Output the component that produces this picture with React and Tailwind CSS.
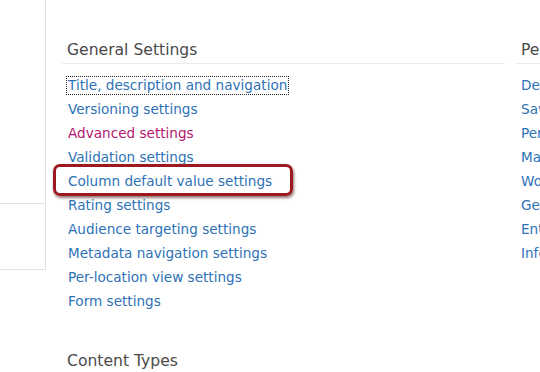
const general = [
  { label: 'Title, description and navigation', focus: true },
  { label: 'Versioning settings' },
  { label: 'Advanced settings', visited: true },
  { label: 'Validation settings' },
  { label: 'Column default value settings', marked: true },
  { label: 'Rating settings' },
  { label: 'Audience targeting settings' },
  { label: 'Metadata navigation settings' },
  { label: 'Per-location view settings' },
  { label: 'Form settings' },
];

const permissions = [
  'Delete this document library',
  'Save document library as template',
  'Permissions for this document library',
  'Manage files which have no checked in version',
  'Workflow Settings',
  'Generate file plan report',
  'Enterprise Metadata and Keywords Settings',
  'Information management policy settings',
];

function LinkRow({ item }) {
  const color = item.visited ? 'text-[#b3176f]' : 'text-[#2d72b6]';
  if (item.marked) {
    return (
      <li className="h-[24px] flex items-center relative">
        <span className={`pl-[6px] ${color}`}>{item.label}</span>
        <div className="absolute left-[-9px] top-[-5px] w-[240px] h-[32px] rounded-[7px] border-[3px] border-[#9c1a1f] shadow-[1px_2px_3px_rgba(60,0,0,0.55)]" />
      </li>
    );
  }
  return (
    <li className="h-[24px] flex items-center">
      <span
        className={`ml-[5px] ${color} ${item.focus ? 'outline outline-1 outline-dotted outline-[#222] outline-offset-0 px-[1px] leading-[17px]' : 'pl-[1px]'}`}
      >
        {item.label}
      </span>
    </li>
  );
}

export default function App() {
  return (
    <div
      className="w-[540px] h-[372px] overflow-hidden bg-white flex"
      style={{ fontFamily: '"DejaVu Sans", Verdana, sans-serif' }}
    >
      <div className="w-[46px] shrink-0 h-[270px] border-r border-b border-[#e2e2e2] flex flex-col">
        <div className="h-[204px] border-b border-[#e2e2e2]" />
        <div className="flex-1 overflow-hidden pt-[36px]">
          <span className="text-[13.6px] text-[#2d72b6] ml-[-6px]">t</span>
        </div>
      </div>

      <div className="flex pl-[16px] pt-[40px] gap-[10px]">
        <section className="w-[443px] shrink-0">
          <h2 className="h-[24px] pl-[5px] text-[15.6px] leading-[20px] text-[#4a4a4a] border-b border-[#ebebeb]">
            General Settings
          </h2>
          <ul className="mt-[9px] text-[13.6px]">
            {general.map(item => (
              <LinkRow key={item.label} item={item} />
            ))}
          </ul>
          <h2 className="mt-[38px] pl-[5px] text-[15.6px] leading-[20px] text-[#4a4a4a]">Content Types</h2>
        </section>

        <section className="w-[300px] shrink-0">
          <h2 className="h-[24px] pl-[6px] text-[15.6px] leading-[20px] text-[#4a4a4a] border-b border-[#ebebeb] whitespace-nowrap">
            Permissions and Management
          </h2>
          <ul className="mt-[9px] text-[13.6px]">
            {permissions.map(p => (
              <li key={p} className="h-[24px] flex items-center pl-[6px] text-[#2d72b6] whitespace-nowrap">
                {p}
              </li>
            ))}
          </ul>
        </section>
      </div>
    </div>
  );
}
